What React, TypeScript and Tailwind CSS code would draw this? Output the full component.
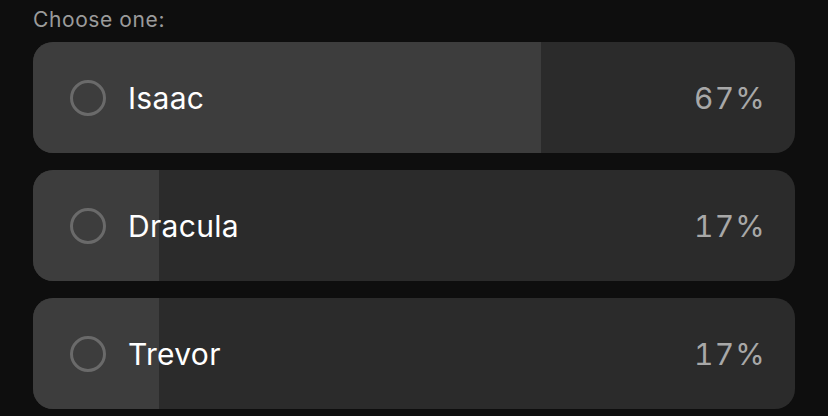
import React from "react";

const options = [
  { name: "Isaac", pct: 67, fill: 508 },
  { name: "Dracula", pct: 17, fill: 126 },
  { name: "Trevor", pct: 17, fill: 126 },
];

export default function App() {
  return (
    <div
      className="w-[828px] h-[416px] bg-[#0e0e0e] px-[33px] pt-[6px] overflow-hidden"
      style={{ fontFamily: "Inter, 'Noto Sans', sans-serif" }}
    >
      <div className="text-[21px] leading-[28px] text-[#9b9b9b] tracking-[0.6px]">Choose one:</div>
      <div className="mt-[8px] flex flex-col gap-[17px]">
        {options.map((o) => (
          <div
            key={o.name}
            className="relative h-[111px] w-[762px] rounded-[20px] bg-[#2b2b2b] overflow-hidden flex items-center"
          >
            <div className="absolute left-0 top-0 bottom-0 bg-[#3d3d3d]" style={{ width: o.fill }} />
            <div className="relative flex items-center w-full pl-[37px] pr-[29px]">
              <div className="w-[36px] h-[36px] rounded-full border-[3px] border-[#6a6a6a]" />
              <div className="ml-[22px] text-[30px] text-white leading-none tracking-[0.3px]">{o.name}</div>
              <div className="ml-auto text-[30px] text-[#a8a8a8] leading-none tracking-[1.2px] tabular-nums">{o.pct}%</div>
            </div>
          </div>
        ))}
      </div>
    </div>
  );
}
